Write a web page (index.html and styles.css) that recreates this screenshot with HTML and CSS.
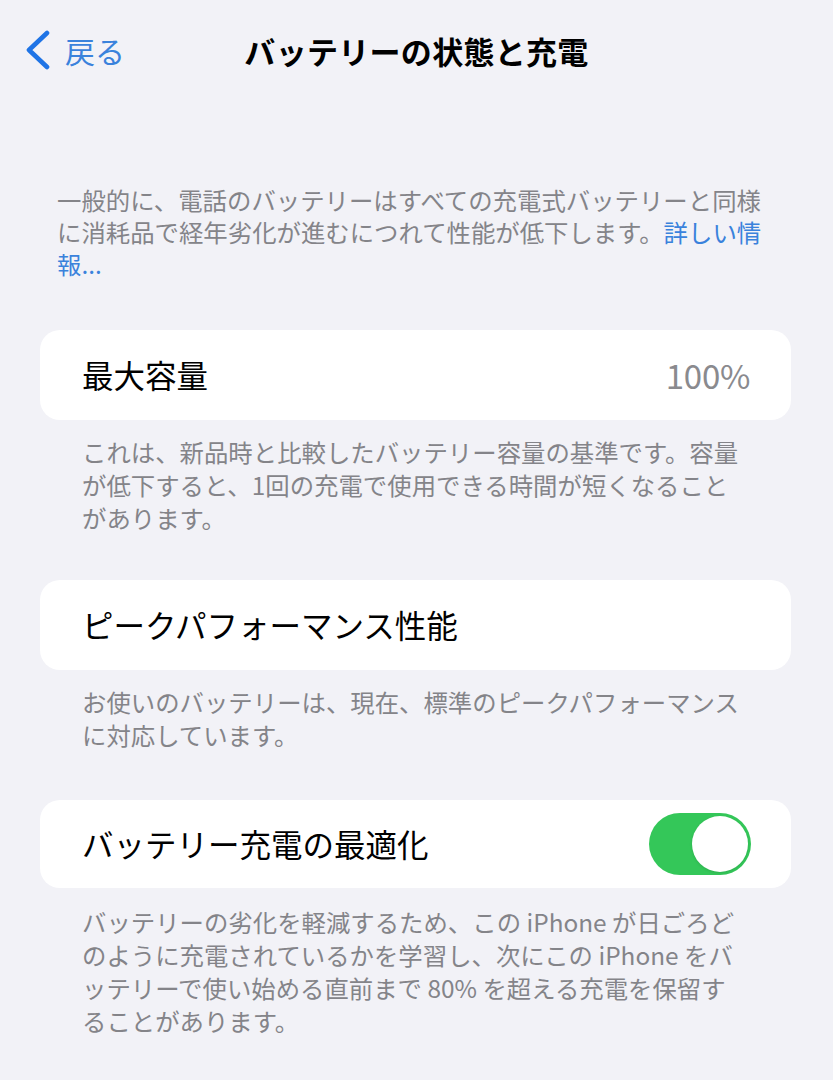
FILE: index.html
```html
<!DOCTYPE html>
<html lang="ja">
<head>
<meta charset="utf-8">
<title>バッテリーの状態と充電</title>
<link rel="stylesheet" href="styles.css">
</head>
<body>
<header class="nav">
  <a class="back" href="#">
    <svg class="chevron" viewBox="0 0 26 40" width="26" height="40" aria-hidden="true">
      <path d="M22 3 L4 20 L22 37" fill="none" stroke="currentColor" stroke-width="4.6" stroke-linecap="round" stroke-linejoin="round"/>
    </svg>
    <span class="back-label">戻る</span>
  </a>
  <h1 class="title">バッテリーの状態と充電</h1>
  <span class="nav-spacer"></span>
</header>

<main class="content">
  <p class="intro">一般的に、電話のバッテリーはすべての充電式バッテリーと同様に消耗品で経年劣化が進むにつれて性能が低下します。<a class="link" href="#">詳しい情報...</a></p>

  <section class="group">
    <div class="card">
      <span class="card-label">最大容量</span>
      <span class="card-value">100%</span>
    </div>
    <p class="footer">これは、新品時と比較したバッテリー容量の基準です。容量が低下すると、1回の充電で使用できる時間が短くなることがあります。</p>
  </section>

  <section class="group">
    <div class="card">
      <span class="card-label">ピークパフォーマンス性能</span>
    </div>
    <p class="footer">お使いのバッテリーは、現在、標準のピークパフォーマンスに対応しています。</p>
  </section>

  <section class="group group-last">
    <div class="card card-toggle">
      <span class="card-label">バッテリー充電の最適化</span>
      <span class="switch is-on" role="switch" aria-checked="true"><span class="knob"></span></span>
    </div>
    <p class="footer footer-spaced">バッテリーの劣化を軽減するため、この iPhone が日ごろどのように充電されているかを学習し、次にこの iPhone をバッテリーで使い始める直前まで 80% を超える充電を保留することがあります。</p>
  </section>
</main>
</body>
</html>
```
FILE: styles.css
```css
* {
  box-sizing: border-box;
}

html, body {
  margin: 0;
  padding: 0;
}

body {
  background: #f2f2f7;
  font-family: "Noto Sans CJK JP", "Noto Sans", "Liberation Sans", sans-serif;
  color: #000;
  width: 833px;
  min-height: 1080px;
}

.nav {
  height: 100px;
  display: grid;
  grid-template-columns: 1fr auto 1fr;
  align-items: center;
}

.back {
  display: flex;
  align-items: center;
  gap: 14px;
  padding-left: 25px;
  color: #2b7be3;
  text-decoration: none;
}

.chevron {
  display: block;
  color: #1f74e6;
}

.back-label {
  font-size: 30px;
  line-height: 1;
  color: #3a82dc;
}

.title {
  margin: 0;
  font-size: 31px;
  font-weight: 700;
  line-height: 1;
  letter-spacing: 0.3px;
}

.content {
  padding-top: 84px;
}

.intro {
  margin: 0 57px 50px 57px;
  font-size: 24.4px;
  line-height: 32px;
  color: #848489;
}

.link {
  color: #3a82dc;
  text-decoration: none;
}

.group {
  margin-bottom: 46px;
}

.group-last {
  padding-top: 3px;
}

.card {
  height: 90px;
  margin: 0 42px 0 40px;
  padding: 0 41px 0 42px;
  background: #fff;
  border-radius: 20px;
  display: flex;
  align-items: center;
  justify-content: space-between;
}

.card-toggle {
  height: 88px;
  padding-right: 40px;
}

.card-label {
  font-size: 31.5px;
  line-height: 1;
}

.card-value {
  font-size: 33px;
  line-height: 1;
  color: #8a8a8e;
  letter-spacing: -0.3px;
}

.switch {
  width: 102px;
  height: 62px;
  border-radius: 31px;
  background: #34c759;
  display: flex;
  align-items: center;
  justify-content: flex-end;
  padding: 3px;
}

.knob {
  width: 56px;
  height: 56px;
  border-radius: 50%;
  background: #fff;
  box-shadow: 0 1px 3px rgba(0, 0, 0, 0.12);
}

.footer {
  margin: 15px 86px 0 82px;
  font-size: 24.4px;
  line-height: 33px;
  color: #848489;
}

.footer-spaced {
  margin-top: 17px;
}
```
